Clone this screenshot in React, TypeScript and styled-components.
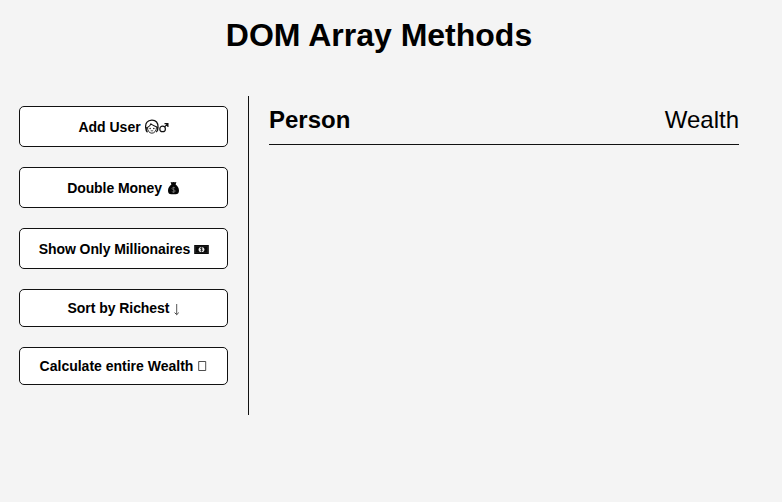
import React from "react";
import styled, { createGlobalStyle } from "styled-components";

const GlobalStyle = createGlobalStyle`
  * { box-sizing: border-box; }
  body {
    margin: 0;
    height: 502px;
    overflow: hidden;
    background: #f4f4f4;
    font-family: "Liberation Sans", Arial, sans-serif;
    color: #000;
  }
`;

const Page = styled.div`
  display: flex;
  flex-direction: column;
  width: 758px;
`;

const Title = styled.h1`
  margin: 17px 0 0;
  height: 37px;
  line-height: 37px;
  font-size: 32px;
  text-align: center;
`;

const Content = styled.div`
  display: flex;
  margin-top: 42px;
  padding-left: 19px;
`;

const Sidebar = styled.aside`
  display: flex;
  flex-direction: column;
  gap: 20px;
  width: 230px;
  height: 319px;
  padding: 10px 20px 30px 0;
  border-right: 1px solid #111;
`;

const ActionButton = styled.button<{ $tall?: boolean; $tracking?: number; $gap?: number; $inset?: number }>`
  display: flex;
  align-items: center;
  justify-content: center;
  gap: ${(p) => p.$gap ?? 4}px;
  width: 209px;
  height: ${(p) => (p.$tall ? 41 : 38)}px;
  padding: 0 0 0 ${(p) => p.$inset ?? 0}px;
  border: 1px solid #111;
  border-radius: 5px;
  background: #fff;
  color: #000;
  font: bold 14px/16px "Liberation Sans", Arial, sans-serif;
  letter-spacing: ${(p) => p.$tracking ?? 0}px;
  white-space: nowrap;
`;

const Glyph = styled.svg`
  flex: none;
  display: block;
`;

const Main = styled.main`
  flex: 1;
  padding: 10px 19px 0 20px;
`;

const ListHeader = styled.h2`
  display: flex;
  justify-content: space-between;
  margin: 0;
  height: 39px;
  border-bottom: 1px solid #111;
  font-size: 24px;
  line-height: 28px;
`;

const Light = styled.span`
  font-weight: 300;
`;

const PersonIcon = () => (
  <Glyph width="24" height="15" viewBox="0 0 24 15" fill="none" stroke="#111">
    <path d="M2.5 13.2C.2 11.2-.1 5.6 2 3.2 4.1.5 9.4.3 11.6 3c2 2.4 1.9 8-.3 10.2" strokeWidth="1.2" />
    <path d="M2.4 8.4C4.2 7.8 5.3 6.6 5.9 4.9c1.9 1.7 4.3 2 6.7 3.5" strokeWidth="1.1" />
    <path d="M2.5 8.2c-.2 3.4 1.8 6 4.4 6s4.6-2.6 4.6-6M1.6 8v4.4M12.6 8v4.2" strokeWidth=".9" />
    <path d="M5.7 11.8h2.5" strokeWidth=".7" />
    <circle cx="5.1" cy="9.4" r=".75" fill="#111" stroke="none" />
    <circle cx="8.8" cy="9.4" r=".75" fill="#111" stroke="none" />
    <circle cx="17.6" cy="9.9" r="2.8" strokeWidth="1.2" />
    <path d="m19.6 7.9 3.1-3.1M19.5 4.7h3.4v3.4" strokeWidth="1.2" />
  </Glyph>
);

const MoneyBagIcon = () => (
  <Glyph width="13" height="15" viewBox="0 0 13 15">
    <path d="M3.6 2.1q1.4.4 2.9-.2 1.5.6 2.9.2L8.6 4.6c2.1 1.4 3.4 3.8 3.4 6.1 0 2.5-1.4 3.5-3.3 3.5H4.3c-2 0-3.3-1-3.3-3.5 0-2.3 1.3-4.7 3.4-6.1z" fill="#050505" />
    <path d="M8.1 8C7.3 7.1 5 7.3 5 8.6c0 1.4 3.2.8 3.2 2.4 0 1.4-2.4 1.5-3.4.5M6.6 6.8v6" fill="none" stroke="#888" strokeWidth=".7" />
  </Glyph>
);

const BanknoteIcon = () => (
  <Glyph width="15" height="15" viewBox="0 0 15 15">
    <path d="M.2 4h14.6v9H.2z" fill="#080808" />
    <path d="M1.5 5.3h12v6.4h-12z" fill="none" stroke="#333" strokeWidth=".5" />
    <ellipse cx="7.5" cy="8.5" rx="2.9" ry="2.6" fill="#eee" />
    <path d="M8.5 7.2c-.9-.6-2-.3-2 .4 0 .9 2 .6 2 1.6 0 .9-1.3 1-2.1.4M7.5 6.4v4.2" fill="none" stroke="#111" strokeWidth=".8" />
  </Glyph>
);

const DownArrowIcon = () => (
  <Glyph width="7" height="16" viewBox="0 0 7 16" fill="none" stroke="#444">
    <path d="M3.7 4v10.5" strokeWidth=".9" />
    <path d="m1.6 12.6 2.1 2.1 2.1-2.1" strokeWidth="1" />
  </Glyph>
);

const EmptyBoxIcon = () => (
  <Glyph width="10" height="16" viewBox="0 0 10 16">
    <path d="M1.7 3.5h7v9h-7z" fill="none" stroke="#222" strokeWidth=".8" />
  </Glyph>
);

export default function App() {
  return (
    <>
      <GlobalStyle />
      <Page>
        <Title>DOM Array Methods</Title>
        <Content>
          <Sidebar>
            <ActionButton $tall>Add User <PersonIcon /></ActionButton>
            <ActionButton $tall $tracking={-0.08} $gap={5}>Double Money <MoneyBagIcon /></ActionButton>
            <ActionButton $tall $tracking={-0.08} $inset={1}>Show Only Millionaires <BanknoteIcon /></ActionButton>
            <ActionButton $tracking={-0.05} $inset={1}>Sort by Richest <DownArrowIcon /></ActionButton>
            <ActionButton>Calculate entire Wealth <EmptyBoxIcon /></ActionButton>
          </Sidebar>
          <Main>
            <ListHeader><span>Person</span><Light>Wealth</Light></ListHeader>
          </Main>
        </Content>
      </Page>
    </>
  );
}
